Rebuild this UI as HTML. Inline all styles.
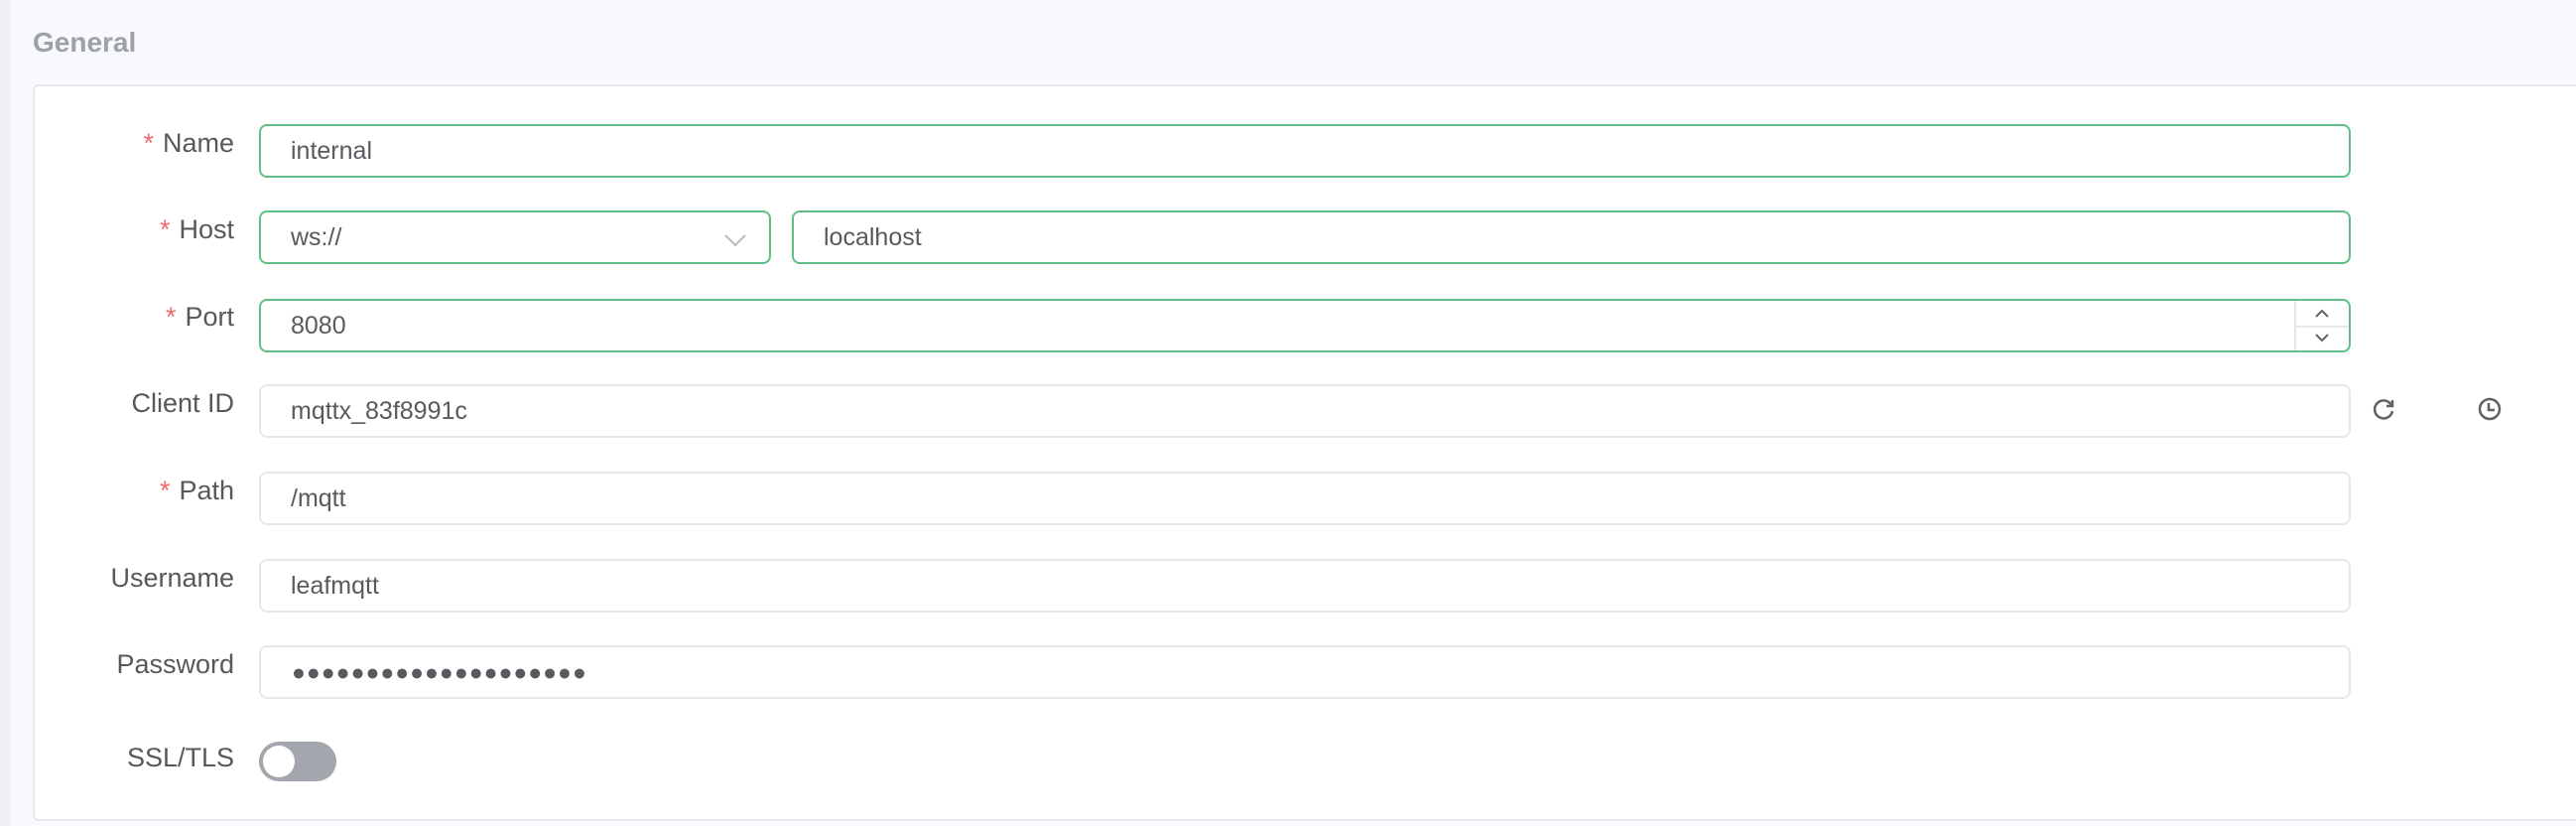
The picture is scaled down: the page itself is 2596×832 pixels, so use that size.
<!DOCTYPE html>
<html><head><meta charset="utf-8"><style>
*{box-sizing:border-box;margin:0;padding:0}
body{width:2596px;height:832px;background:#f8f9fc;position:relative;overflow:hidden;font-family:"Liberation Sans",sans-serif}
.strip{position:absolute;left:0;top:0;width:10px;height:832px;background:#eef0f5}
.title{position:absolute;left:33px;top:27px;font-size:28px;font-weight:bold;color:#9ea1a8}
.card{position:absolute;left:33px;top:85px;width:2600px;height:742px;background:#fff;border:2px solid #e6e8ee;border-radius:6px}
.lbl{position:absolute;right:calc(2596px - 236px);font-size:27px;color:#56585c;text-align:right;white-space:nowrap}
.req{color:#f06a6a;margin-right:9px}
.in{position:absolute;left:261px;width:2108px;height:54px;border:2px solid #e4e7ed;border-radius:8px;background:#fff;font-size:25px;color:#575a5e;padding-left:30px;line-height:50px}
.g{border-color:#5fbf86}
svg{position:absolute}
</style></head><body>
<div class="strip"></div>
<div class="title">General</div>
<div class="card"></div>

<div class="lbl" style="top:129px"><span class="req">*</span>Name</div>
<div class="in g" style="top:125px">internal</div>

<div class="lbl" style="top:216px"><span class="req">*</span>Host</div>
<div class="in g" style="top:212px;width:516px">ws://</div>
<svg style="left:729px;top:234px" width="24" height="16" viewBox="0 0 24 16"><path d="M2 3 L12 13 L22 3" fill="none" stroke="#b8bbc2" stroke-width="2"/></svg>
<div class="in g" style="top:212px;left:798px;width:1571px">localhost</div>

<div class="lbl" style="top:304px"><span class="req">*</span>Port</div>
<div class="in g" style="top:301px">8080</div>
<div style="position:absolute;left:2312px;top:303px;width:2px;height:50px;background:#e4e7ed"></div>
<div style="position:absolute;left:2314px;top:328px;width:53px;height:2px;background:#e4e7ed"></div>
<svg style="left:2332px;top:310px" width="16" height="12" viewBox="0 0 16 12"><path d="M2 9 L8 3 L14 9" fill="none" stroke="#606266" stroke-width="2"/></svg>
<svg style="left:2332px;top:334px" width="16" height="12" viewBox="0 0 16 12"><path d="M2 3 L8 9 L14 3" fill="none" stroke="#606266" stroke-width="2"/></svg>

<div class="lbl" style="top:391px">Client ID</div>
<div class="in" style="top:387px">mqttx_83f8991c</div>
<svg style="left:2391px;top:400px" width="24" height="24" viewBox="0 0 24 24"><path d="M19 8 A9 9 0 1 0 20 14" fill="none" stroke="#5f6165" stroke-width="2.5"/><path d="M20 3 L20 9 L14 9" fill="none" stroke="#5f6165" stroke-width="2.5"/></svg>
<svg style="left:2497px;top:400px" width="24" height="24" viewBox="0 0 24 24"><circle cx="12" cy="12" r="10" fill="none" stroke="#5f6165" stroke-width="2.5"/><path d="M11 6 V13 H17" fill="none" stroke="#5f6165" stroke-width="2.5"/></svg>

<div class="lbl" style="top:479px"><span class="req">*</span>Path</div>
<div class="in" style="top:475px">/mqtt</div>

<div class="lbl" style="top:567px">Username</div>
<div class="in" style="top:563px">leafmqtt</div>

<div class="lbl" style="top:654px">Password</div>
<div class="in" style="top:650px;font-size:23px;letter-spacing:1px;padding-left:31px">●●●●●●●●●●●●●●●●●●●●</div>

<div class="lbl" style="top:748px">SSL/TLS</div>
<div style="position:absolute;left:261px;top:747px;width:78px;height:40px;border-radius:20px;background:#a3a7ad"></div>
<div style="position:absolute;left:265px;top:751px;width:32px;height:32px;border-radius:50%;background:#fff"></div>
</body></html>
